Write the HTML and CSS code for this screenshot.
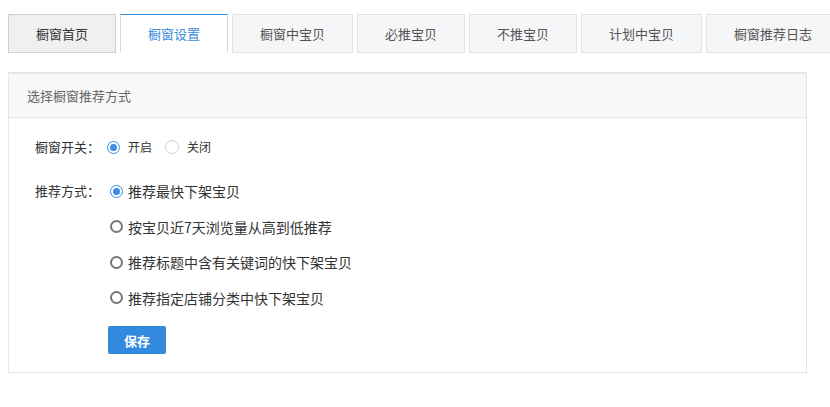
FILE: index.html
```html
<!DOCTYPE html>
<html lang="zh-CN">

<head>
    <meta charset="UTF-8">
    <meta name="viewport" content="width=device-width, initial-scale=1.0">
    <title>橱窗设置</title>
    <link rel="stylesheet" href="styles.css">
</head>

<body>
    <nav class="tabs">
        <a class="tab first">橱窗首页</a>
        <a class="tab active">橱窗设置</a>
        <a class="tab">橱窗中宝贝</a>
        <a class="tab">必推宝贝</a>
        <a class="tab">不推宝贝</a>
        <a class="tab">计划中宝贝</a>
        <a class="tab">橱窗推荐日志</a>
    </nav>

    <section class="panel">
        <header class="panel-head">选择橱窗推荐方式</header>
        <div class="panel-body">
            <div class="row switch-row">
                <span class="label">橱窗开关：</span>
                <label class="radio small"><span class="dot on"></span>开启</label>
                <label class="radio small"><span class="dot light"></span>关闭</label>
            </div>
            <div class="row mode-row">
                <span class="label">推荐方式：</span>
                <div class="options">
                    <label class="radio"><span class="dot on"></span>推荐最快下架宝贝</label>
                    <label class="radio"><span class="dot"></span>按宝贝近7天浏览量从高到低推荐</label>
                    <label class="radio"><span class="dot"></span>推荐标题中含有关键词的快下架宝贝</label>
                    <label class="radio"><span class="dot"></span>推荐指定店铺分类中快下架宝贝</label>
                    <button class="save">保存</button>
                </div>
            </div>
        </div>
    </section>
</body>

</html>
```

FILE: styles.css
```css
body {
    margin: 0;
    font-family: "Noto Sans CJK SC", "Liberation Sans", sans-serif;
    color: #333;
    background: #fff;
    width: 830px;
    overflow: hidden;
}

/* tabs */
.tabs {
    display: flex;
    gap: 4px;
    padding: 14px 0 0 8px;
    white-space: nowrap;
}

.tab {
    flex: none;
    height: 37px;
    line-height: 37px;
    padding: 0 27px;
    font-size: 13px;
    color: #555;
    background-color: #f5f6f8;
    border: 1px solid #e3e3e3;
    cursor: pointer;
}

.tab.first {
    background-color: #f0f0f0;
    border-color: #cfcfcf;
    color: #333;
}

.tab.active {
    background-color: #fff;
    color: #3b8de0;
    border-color: #d8d8d8;
    border-top-color: #3a8ee6;
    border-bottom-color: transparent;
}

/* panel */
.panel {
    margin: 19px 0 0 8px;
    width: 797px;
    border: 1px solid #e6e6e6;
    border-top-width: 2px;
}

.panel-head {
    height: 43px;
    line-height: 43px;
    padding-left: 18px;
    font-size: 13px;
    color: #666;
    background-color: #f8f8f8;
    border-bottom: 1px solid #e6e6e6;
}

.panel-body {
    padding: 19px 0 18px 26px;
}

.row {
    display: flex;
    align-items: flex-start;
}

.label {
    width: 72px;
    flex: none;
    font-size: 13px;
    line-height: 20px;
    color: #333;
}

.switch-row {
    margin-bottom: 24px;
}

.switch-row .radio + .radio {
    margin-left: 13px;
}

.options {
    display: flex;
    flex-direction: column;
    align-items: flex-start;
    gap: 15.6px;
    padding-left: 3px;
}

/* radios */
.radio {
    display: flex;
    align-items: center;
    gap: 5px;
    font-size: 14px;
    line-height: 20px;
    color: #333;
    cursor: pointer;
}

.radio.small {
    font-size: 12px;
    gap: 8px;
}

.dot {
    position: relative;
    box-sizing: border-box;
    width: 13px;
    height: 13px;
    border-radius: 50%;
    border: 2px solid #777;
    background: #fff;
}

.dot.light {
    border: 1px solid #cfcfcf;
    width: 14px;
    height: 14px;
}

.dot.on {
    border: 1px solid #3a8ee6;
}

.dot.on:after {
    content: "";
    position: absolute;
    left: 2px;
    top: 2px;
    width: 7px;
    height: 7px;
    border-radius: 50%;
    background-color: #3a8ee6;
}

.save {
    margin: 3px 0 0 -2px;
    width: 58px;
    height: 28px;
    border: none;
    border-radius: 2px;
    background-color: #318ade;
    color: #fff;
    font-family: inherit;
    font-size: 13px;
    font-weight: bold;
    cursor: pointer;
}
```
